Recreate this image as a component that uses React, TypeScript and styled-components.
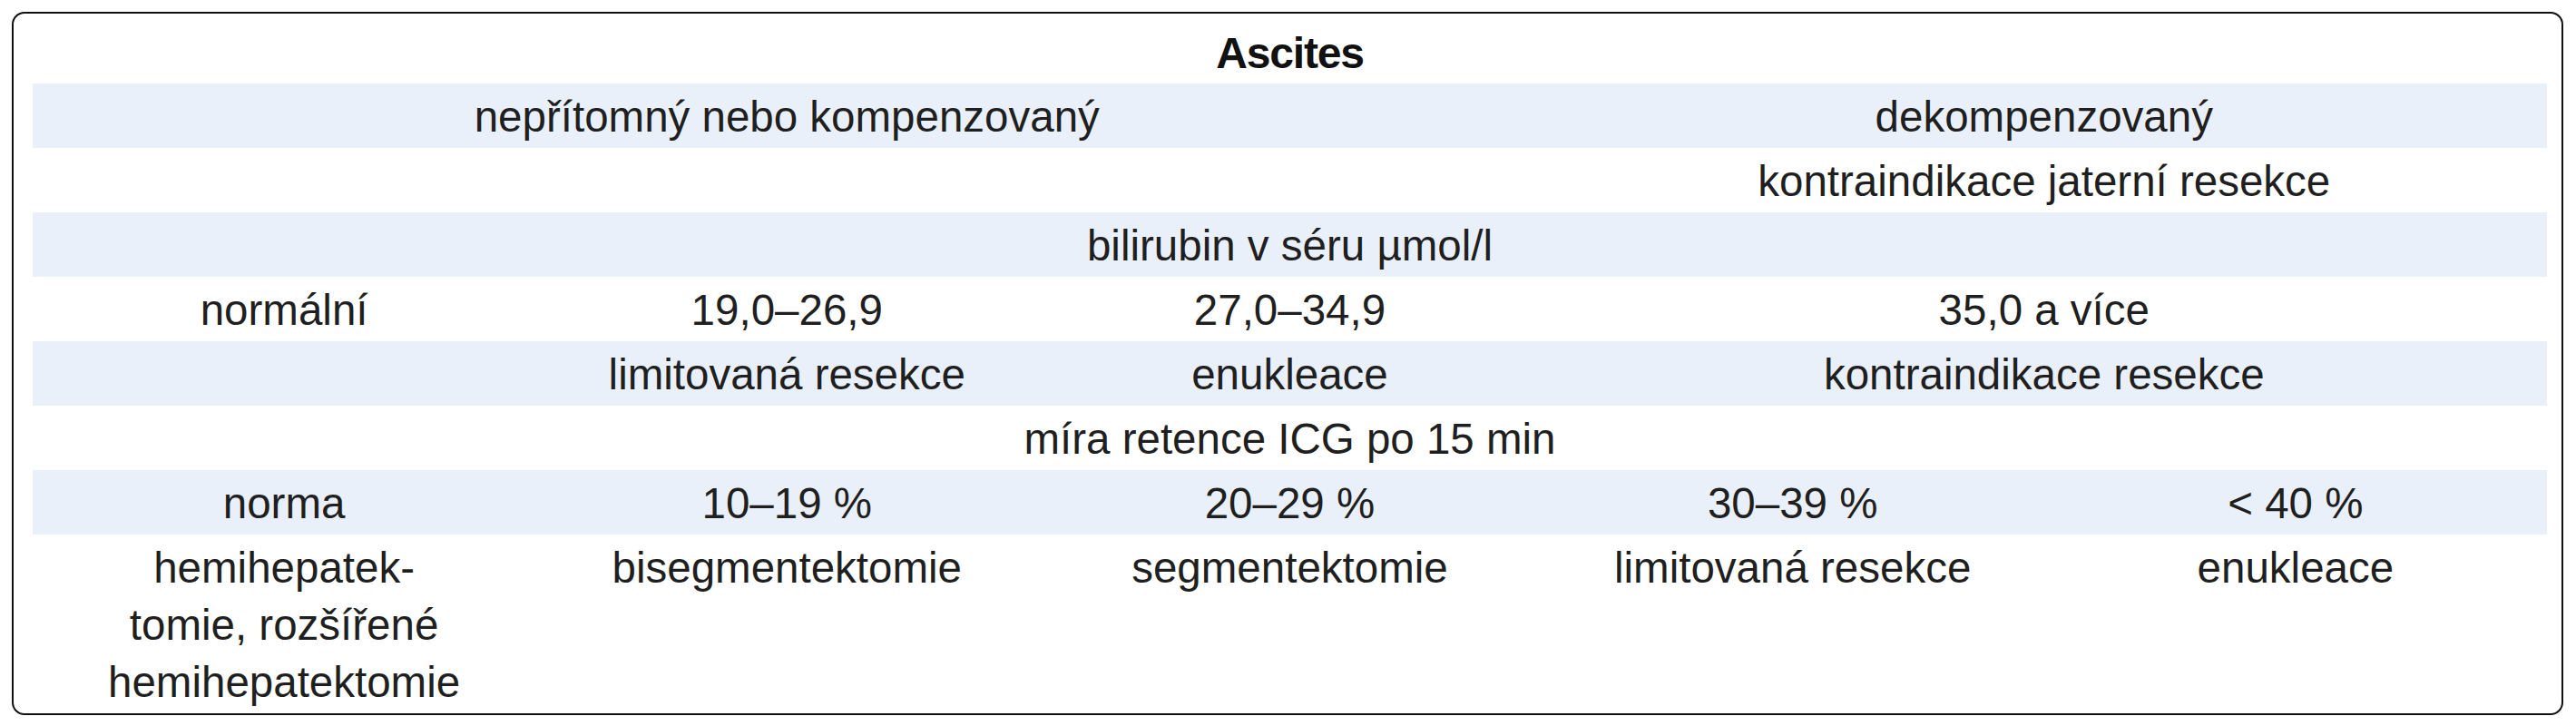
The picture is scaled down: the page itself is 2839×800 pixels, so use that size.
import React from 'react'
import styled, { createGlobalStyle } from 'styled-components'

type Cell = { text?: React.ReactNode; span?: number }
type RowData = { shaded?: boolean; cells: Cell[] }

const rows: RowData[] = [
  {
    shaded: true,
    cells: [{ text: 'nepřítomný nebo kompenzovaný', span: 3 }, { text: 'dekompenzovaný', span: 2 }],
  },
  {
    cells: [{ span: 3 }, { text: 'kontraindikace jaterní resekce', span: 2 }],
  },
  {
    shaded: true,
    cells: [{ text: 'bilirubin v séru µmol/l', span: 5 }],
  },
  {
    cells: [{ text: 'normální' }, { text: '19,0–26,9' }, { text: '27,0–34,9' }, { text: '35,0 a více', span: 2 }],
  },
  {
    shaded: true,
    cells: [{}, { text: 'limitovaná resekce' }, { text: 'enukleace' }, { text: 'kontraindikace resekce', span: 2 }],
  },
  {
    cells: [{ text: 'míra retence ICG po 15 min', span: 5 }],
  },
  {
    shaded: true,
    cells: [{ text: 'norma' }, { text: '10–19 %' }, { text: '20–29 %' }, { text: '30–39 %' }, { text: '< 40 %' }],
  },
  {
    cells: [
      {
        text: (
          <>
            hemihepatek-
            <br />
            tomie, rozšířené
            <br />
            hemihepatektomie
          </>
        ),
      },
      { text: 'bisegmentektomie' },
      { text: 'segmentektomie' },
      { text: 'limitovaná resekce' },
      { text: 'enukleace' },
    ],
  },
]

export default function App() {
  return (
    <>
      <GlobalStyle />
      <Frame>
        <Table>
          <colgroup>
            <col />
            <col />
            <col />
            <col />
            <col />
          </colgroup>
          <thead>
            <tr>
              <TitleCell colSpan={5}>Ascites</TitleCell>
            </tr>
          </thead>
          <tbody>
            {rows.map((row, i) => (
              <Row key={i} $shaded={row.shaded}>
                {row.cells.map((cell, j) => (
                  <Td key={j} colSpan={cell.span ?? 1}>
                    {cell.text}
                  </Td>
                ))}
              </Row>
            ))}
          </tbody>
        </Table>
      </Frame>
    </>
  )
}

const GlobalStyle = createGlobalStyle`
  html, body {
    margin: 0;
    padding: 0;
    background: #ffffff;
  }
  body {
    padding: 13px;
    font-family: "Liberation Sans", Arial, sans-serif;
    color: #1f1f1f;
  }
`

const Frame = styled.div`
  box-sizing: border-box;
  width: 2812px;
  height: 775px;
  border: 2px solid #111111;
  border-radius: 14px;
  padding: 0 16px 0 21px;
  background: #ffffff;
`

const Table = styled.table`
  width: 2771px;
  table-layout: fixed;
  border-collapse: collapse;
  border-spacing: 0;
`

const TitleCell = styled.th`
  height: 77px;
  box-sizing: border-box;
  padding: 12px 0 2px;
  font-size: 48px;
  line-height: 63px;
  font-weight: 700;
  letter-spacing: -1.2px;
  color: #111111;
  text-align: center;
  vertical-align: top;
`

const Row = styled.tr<{ $shaded?: boolean }>`
  background: ${(p) => (p.$shaded ? '#e9f0fa' : 'transparent')};
`

const Td = styled.td`
  padding: 5px 8px 3px;
  font-size: 47.5px;
  line-height: 63px;
  text-align: center;
  vertical-align: top;
  white-space: nowrap;
`
